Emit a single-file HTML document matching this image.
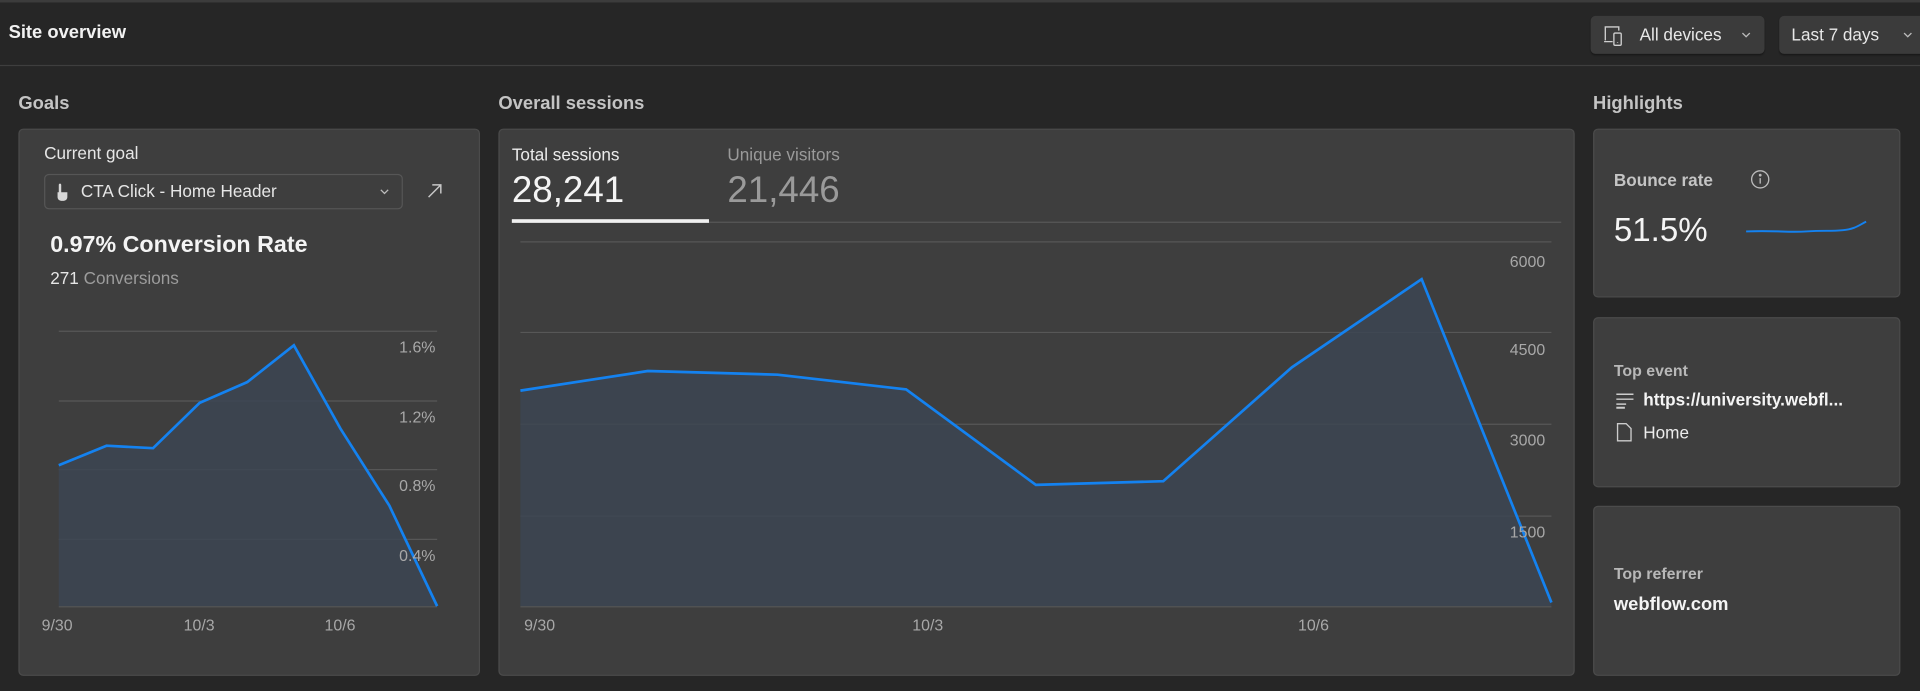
<!DOCTYPE html>
<html><head><meta charset="utf-8"><style>
html,body{margin:0;padding:0;background:#262626;width:1920px;height:690px;overflow:hidden}
#w{position:absolute;left:0;top:0;width:1568px;height:564px;transform:scale(1.22449);transform-origin:0 0;font-family:"Liberation Sans",sans-serif;color:#e8e8e8}
.a{position:absolute;white-space:nowrap}
.card{position:absolute;background:#3e3e3e;border:1px solid #4b4b4b;border-radius:4px;box-sizing:border-box}
.dd{position:absolute;background:#3b3b3b;border-radius:4px;box-shadow:0 1px 1px #1a1a1a;height:31px;top:13px}
.sec{font-size:15px;font-weight:bold;color:#c4c4c4}
.ax{font-size:13px;color:#a8a8a8}
</style></head><body><div id="w">
<div class="a" style="left:0;top:0;width:1568px;height:2px;background:#3c3c3c"></div>
<div class="a" style="left:7px;top:18px;font-size:15px;font-weight:bold;color:#f2f2f2">Site overview</div>
<div class="a" style="left:0;top:53px;width:1568px;height:1px;background:#3e3e3e"></div>

<div class="dd" style="left:1299px;width:142px">
<svg class="a" style="left:10px;top:7px" width="18" height="18" viewBox="0 0 18 18" fill="none" stroke="#cfcfcf" stroke-width="1.1"><path d="M2 13V2h11v3"/><path d="M1 14h7"/><rect x="9" y="7" width="6" height="10" rx="1"/><path d="M12 14.5v.5"/></svg>
<div class="a" style="left:40px;top:7px;font-size:14px;color:#e8e8e8">All devices</div>
<svg class="a" style="left:122px;top:12px" width="10" height="8" viewBox="0 0 10 8" fill="none" stroke="#bbb" stroke-width="1.1"><path d="M2 2l3 3 3-3"/></svg>
</div>
<div class="dd" style="left:1453px;width:120px">
<div class="a" style="left:10px;top:7px;font-size:14px;color:#e8e8e8">Last 7 days</div>
<svg class="a" style="left:100px;top:12px" width="10" height="8" viewBox="0 0 10 8" fill="none" stroke="#bbb" stroke-width="1.1"><path d="M2 2l3 3 3-3"/></svg>
</div>

<div class="a sec" style="left:15px;top:76px">Goals</div>
<div class="a sec" style="left:407px;top:76px">Overall sessions</div>
<div class="a sec" style="left:1301px;top:76px">Highlights</div>

<div class="card" style="left:15px;top:105px;width:377px;height:447px"></div>
<div class="card" style="left:407px;top:105px;width:879px;height:447px"></div>
<div class="card" style="left:1301px;top:105px;width:251px;height:138px"></div>
<div class="card" style="left:1301px;top:259px;width:251px;height:139px"></div>
<div class="card" style="left:1301px;top:413px;width:251px;height:139px"></div>

<svg class="a" style="left:0;top:0" width="1568" height="564">
<g stroke="#575757" stroke-width="1"><path d="M48 270.5H357M48 327.5H357M48 383.5H357M48 440.5H357M48 495.5H357"/>
<path d="M418 181.5H1275M425 197.5H1267M425 271.5H1267M425 346.5H1267M425 421.5H1267M425 495.5H1267"/></g>
<path d="M48 380L87 364L125 366L163 329L202 312L240 282L278 350L318 413L357 495L48 495Z" fill="#3c4552" fill-opacity="0.85"/>
<path d="M48 380L87 364L125 366L163 329L202 312L240 282L278 350L318 413L357 495" fill="none" stroke="#1482f0" stroke-width="2.2"/>
<path d="M425 319L529 303L635 306L740 318L846 396L950 393L1055 300L1161 228L1267 492L1267 495L425 495Z" fill="#3c4552" fill-opacity="0.85"/>
<path d="M425 319L529 303L635 306L740 318L846 396L950 393L1055 300L1161 228L1267 492" fill="none" stroke="#1482f0" stroke-width="2.2"/>
<path d="M1426 189C1450 188 1460 190 1475 189S1495 189 1505 188S1518 184 1524 181" fill="none" stroke="#1482f0" stroke-width="1.6"/>
</svg>

<div class="a" style="left:36px;top:117px;font-size:14px;color:#e6e6e6">Current goal</div>
<div class="a" style="left:36px;top:142px;width:293px;height:29px;border:1px solid #565656;border-radius:4px;box-sizing:border-box"></div>
<svg class="a" style="left:44px;top:149px" width="14" height="16" viewBox="0 0 14 16" fill="#d8d8d8"><rect x="4" y="1" width="2" height="8" rx="1"/><path d="M3 8h8v4a3 3 0 0 1-3 3H6a3 3 0 0 1-3-3z"/></svg>
<div class="a" style="left:66px;top:148px;font-size:14px;color:#e6e6e6">CTA Click - Home Header</div>
<svg class="a" style="left:309px;top:153px" width="10" height="8" viewBox="0 0 10 8" fill="none" stroke="#bbb" stroke-width="1.1"><path d="M2 2l3 3 3-3"/></svg>
<svg class="a" style="left:347px;top:148px" width="16" height="16" viewBox="0 0 16 16" fill="none" stroke="#c8c8c8" stroke-width="1.2"><path d="M3 13L13 3M6 3h7v7"/></svg>
<div class="a" style="left:41px;top:190px;font-size:19px;font-weight:bold;color:#f4f4f4">0.97% Conversion Rate</div>
<div class="a" style="left:41px;top:219px;font-size:14px;color:#e6e6e6">271 <span style="color:#9c9c9c">Conversions</span></div>
<div class="a ax" style="left:326px;top:276px">1.6%</div>
<div class="a ax" style="left:326px;top:333px">1.2%</div>
<div class="a ax" style="left:326px;top:389px">0.8%</div>
<div class="a ax" style="left:326px;top:446px">0.4%</div>
<div class="a ax" style="left:34px;top:503px">9/30</div>
<div class="a ax" style="left:150px;top:503px">10/3</div>
<div class="a ax" style="left:265px;top:503px">10/6</div>

<div class="a" style="left:418px;top:118px;font-size:14px;color:#ececec">Total sessions</div>
<div class="a" style="left:418px;top:139px;font-size:30px;color:#f4f4f4">28,241</div>
<div class="a" style="left:418px;top:179px;width:161px;height:3px;background:#f0f0f0"></div>
<div class="a" style="left:594px;top:118px;font-size:14px;color:#9a9a9a">Unique visitors</div>
<div class="a" style="left:594px;top:139px;font-size:30px;color:#9a9a9a">21,446</div>
<div class="a ax" style="left:1233px;top:206px">6000</div>
<div class="a ax" style="left:1233px;top:278px">4500</div>
<div class="a ax" style="left:1233px;top:352px">3000</div>
<div class="a ax" style="left:1233px;top:427px">1500</div>
<div class="a ax" style="left:428px;top:503px">9/30</div>
<div class="a ax" style="left:745px;top:503px">10/3</div>
<div class="a ax" style="left:1060px;top:503px">10/6</div>

<div class="a" style="left:1318px;top:139px;font-size:14px;font-weight:bold;color:#c4c4c4">Bounce rate</div>
<svg class="a" style="left:1429px;top:138px" width="17" height="17" viewBox="0 0 17 17" fill="none" stroke="#bbb" stroke-width="1.1"><circle cx="8.5" cy="8.5" r="7"/><path d="M8.5 7.5v4.5"/><circle cx="8.5" cy="5" r=".6" fill="#bbb"/></svg>
<div class="a" style="left:1318px;top:173px;font-size:27px;color:#f4f4f4">51.5%</div>

<div class="a" style="left:1318px;top:295px;font-size:13px;font-weight:bold;color:#b8b8b8">Top event</div>
<svg class="a" style="left:1319px;top:320px" width="16" height="14" viewBox="0 0 16 14" fill="none" stroke="#ccc" stroke-width="1.2"><path d="M1 2h14M1 6h14M1 10h8"/><path d="M1 13h7" stroke-width="1.6"/></svg>
<div class="a" style="left:1342px;top:318px;font-size:14px;font-weight:bold;color:#f4f4f4">https://university.webfl...</div>
<svg class="a" style="left:1320px;top:345px" width="13" height="16" viewBox="0 0 13 16" fill="none" stroke="#ccc" stroke-width="1.1"><path d="M1 1h7l4 4v10H1z"/></svg>
<div class="a" style="left:1342px;top:345px;font-size:14px;color:#ececec">Home</div>

<div class="a" style="left:1318px;top:461px;font-size:13px;font-weight:bold;color:#b8b8b8">Top referrer</div>
<div class="a" style="left:1318px;top:485px;font-size:15px;font-weight:bold;color:#f4f4f4">webflow.com</div>
</div></body></html>
